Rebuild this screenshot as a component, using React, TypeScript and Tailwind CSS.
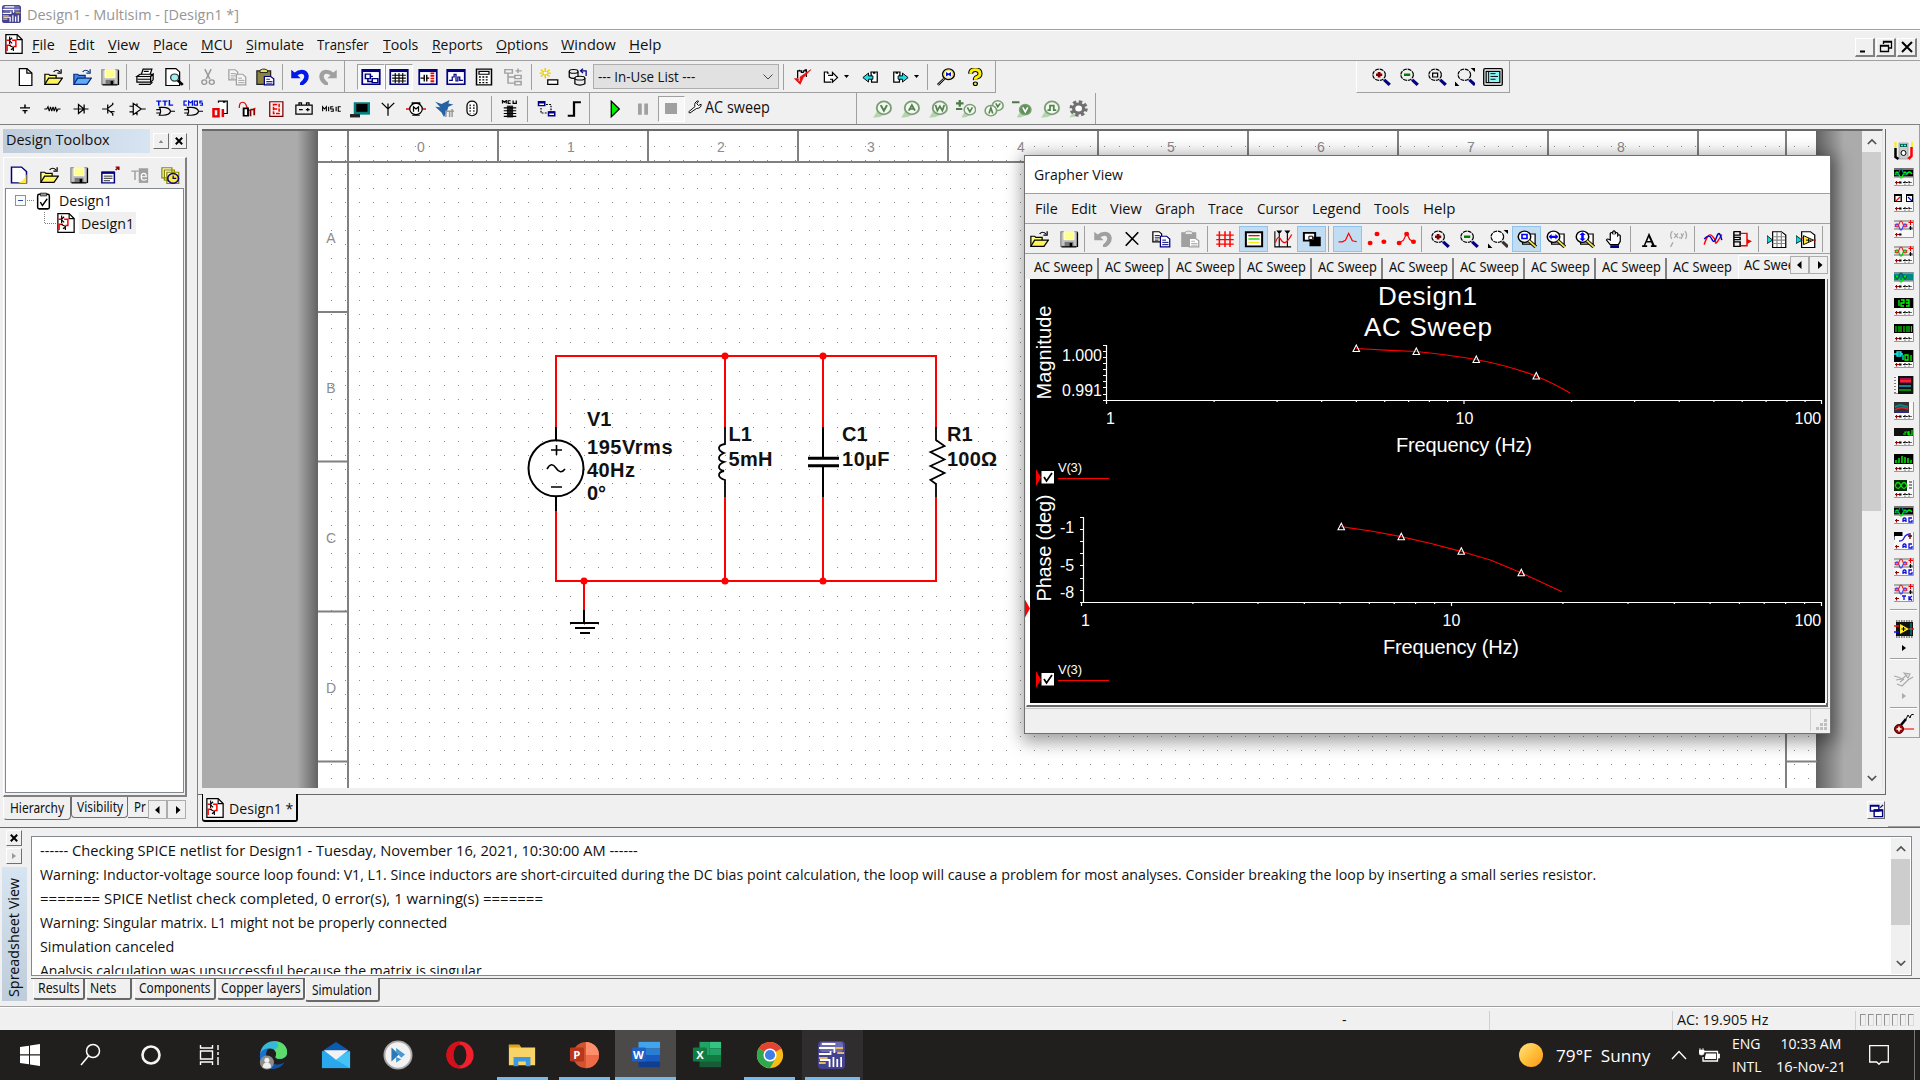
import React, { useLayoutEffect, useRef } from "react";

type Kids = { children?: React.ReactNode };

/* Text squeezed or stretched to an exact rendered width. */
function Fit({ w, className = "", children }: { w: number; className?: string } & Kids) {
  const ref = useRef<HTMLSpanElement>(null);
  useLayoutEffect(() => {
    const el = ref.current;
    if (el && el.offsetWidth) el.style.transform = `scaleX(${w / el.offsetWidth})`;
  });
  return (
    <span className={`inline-block shrink-0 whitespace-pre text-left ${className}`} style={{ width: w }}>
      <span ref={ref} className="inline-block origin-left whitespace-pre">{children}</span>
    </span>
  );
}

const UI = "font-['Open_Sans',sans-serif]";
const TAH = "font-['Noto_Sans',sans-serif]";

function Mag({ fill = "none", handle = "#000080", children }: { fill?: string; handle?: string } & Kids) {
  return (
    <>
      <circle cx="6.500" cy="6" r="5" fill={fill} stroke="#000" strokeDasharray="3.200 .7" />
      <path d="M10.500 10.500l4.500 4.500" stroke={handle} strokeWidth="2.600" />
      {children}
    </>
  );
}

const openFolder = (a: string, b: string, s: string) => (
  <>
    <path d="M1.500 14V5.500h3l1 1h5V9" fill={a} stroke={s} />
    <path d="M1.500 14.500l3-5.500h11l-3.500 5.500z" fill={b} stroke={s} />
    <path d="M8.500 3.500q2.500-3 5 0M14.500 1v3.500h-3" fill="none" stroke={s} />
  </>
);
const floppy = (
  <>
    <path d="M1.500 1.500h13v13h-13z" fill="#c4c4c4" stroke="#888" />
    <path d="M4 1.500h8v7H4z" fill="#ffff8c" stroke="#fff" strokeWidth=".8" />
    <path d="M4.500 10.500h7V15h-7z" fill="#777" /><path d="M8.500 11.500h2V15h-2z" fill="#000" />
    <path d="M2 15h12M14.800 2v13" stroke="#000" />
  </>
);
const pages = (c: string, f: string, d: string) => (
  <>
    <path d="M1.500 1.500h5l2 2v7h-7z" fill={f} stroke={c} /><path d="M3 5h4M3 7h4M3 9h3" stroke={c} strokeWidth=".8" />
    <path d="M7.500 5.500h5l2.500 2.500v7h-7.500z" fill={f} stroke={d} /><path d="M9 9h3M9 11h5M9 13h5" stroke={d} strokeWidth=".8" />
  </>
);
const paste = (a: string, b: string, c: string, k: string) => (
  <>
    <path d="M1.500 2.500h11v12h-11z" fill={a} stroke={b} /><path d="M4 4V2l2-1h2l2 1v2z" fill={k} stroke={b} strokeWidth=".8" />
    <path d="M7.500 7.500h5l2.500 2v5.500h-7.500z" fill="#fff" stroke={c} /><path d="M9 10h3M9 12h5M9 13.500h5" stroke={c} strokeWidth=".7" />
  </>
);
const undo = (c: string) => (
  <path d="M1 1.500v7.500h7.500L6 6.500Q9 4 10.800 5.800q1.500 2.200-.8 5l-2 2.200V15h2.500q4.500-3 4.500-8Q14.500 2 9.500 1.500 6 1.500 3.700 4z" fill={c} />
);
const sheetIcon = (
  <>
    <path d="M1.500 .5h9l4 4v11h-13z" fill="#fff" stroke="#000" /><path d="M10.500 .5v4h4" fill="none" stroke="#000" strokeWidth=".9" />
    <path d="M2 5h2M6.500 5h3v5h-2M2.500 13.500V9h3" fill="none" stroke="#f00" strokeWidth="1.200" />
    <path d="M4.500 2v6M4.500 5l2-2M4.500 5.500l2 2M4 9l4 2M7.500 10.500v3M5.500 12.500l2-1" fill="none" stroke="#000" strokeWidth=".9" />
  </>
);
const navyBox = (inner: React.ReactNode) => (
  <>
    <path d="M1 1.500h14v13H1z" fill="#fff" stroke="#000080" strokeWidth="1.400" /><path d="M1 1h14v2.600H1z" fill="#000080" />
    {inner}
  </>
);
const gate = (
  <path d="M3.500 6.500h3q5 0 6 3.500-1 3.500-6 3.500h-3q2-3.500 0-7zM1 8.500h3M1 11.500h3M12.500 10H16" fill="none" stroke="#000" />
);
const probe = (inner: React.ReactNode, solid?: boolean) => (
  <>
    <path d="M1 15.500l4-7 4 5q-3 2.500-8 2z" fill="#b4d4ae" />
    <circle cx="9.500" cy="7" r="5.700" fill={solid ? "#5f8f5a" : "#f4f8f2"} stroke="#7a9f74" strokeWidth="1.500" />
    {inner}
  </>
);
const vL = <path d="M7 4.500l2.500 5 2.500-5" fill="none" stroke="#55804f" strokeWidth="1.600" />;
const zoomBase = (
  <>
    <path d="M4.500 3.500h10v9h-10z" fill="#fff" stroke="#000" /><circle cx="6" cy="6" r="5" fill="#fff" stroke="#000" strokeWidth="1.200" />
    <path d="M9.500 9.500l5.500 5.500" stroke="#000" strokeWidth="3" /><path d="M9.500 9.500l5.500 5.500" stroke="#f0e050" strokeWidth="1.500" />
  </>
);

const ICONS: Record<string, React.ReactNode> = {
  new: <><path d="M3.500 .5h6l4 4v11h-10z" fill="#fff" stroke="#000" /><path d="M9.500 .5v4h4" fill="none" stroke="#000" /></>,
  newy: <><path d="M2 1h8l4 4v10H2z" fill="#fff" stroke="#000080" strokeWidth="1.200" /><path d="M14 7v8H7q5-1 7-8z" fill="#ffe838" /></>,
  open: openFolder("#ffff80", "#fff45a", "#000"),
  openb: openFolder("#3d8ae4", "#62aaf4", "#0a2c80"),
  save: floppy,
  print: <><path d="M5 6l1.500-5h7L12 6" fill="#fff" stroke="#000" /><path d="M1.500 7.500L4 5.500h10l-1.500 2zM1.500 7.500h11v5h-11z" fill="#eee" stroke="#000" /><path d="M12.500 7.500l2-2v5l-2 2M3 14.500h9l2-2M2 10h10M7 3h4" fill="none" stroke="#000" /></>,
  preview: <><path d="M1.500 .5h8l3 3v12h-11z" fill="#fff" stroke="#000" /><circle cx="8.500" cy="8.500" r="3.200" fill="#9ff0f4" stroke="#333" /><path d="M11 11l4 4" stroke="#000" strokeWidth="2.200" /></>,
  cut: <g fill="none" stroke="#9a9a9a" strokeWidth="1.200"><path d="M5.500 1L9.500 10M10.500 1L6.500 10" /><circle cx="5" cy="12.500" r="2" /><circle cx="11" cy="12.500" r="2" /></g>,
  copyg: pages("#a0a0a0", "#f4f4f4", "#a0a0a0"),
  copy: pages("#000", "#fff", "#000080"),
  paste: paste("#8a8440", "#222", "#000080", "#e8e060"),
  pasteg: paste("#a0a0a0", "#a0a0a0", "#a0a0a0", "#e8e8e8"),
  undo: undo("#0018e8"),
  undog: undo("#a0a0a0"),
  redog: <g transform="translate(16 0) scale(-1 1)">{undo("#a0a0a0")}</g>,
  tb1: navyBox(<path d="M3.500 5.500h4v4h-4zM7.500 7.500h2M9 9.500h4.500v3.500H9zM5.500 9.500v2.500H9" fill="none" stroke="#000080" strokeWidth="1.200" />),
  tb2: navyBox(<path d="M2.500 6.500h11M2.500 9h11M2.500 11.500h11M5 4.500v9M8 4.500v9M11 4.500v9" stroke="#000" strokeWidth=".9" />),
  tb3: navyBox(<><path d="M2 9h3M5 6v6M7 6v6M7 9h2" stroke="#000" strokeWidth="1.100" /><path d="M11.500 4v10" stroke="#e00" strokeWidth="3" strokeDasharray="1.500 .8" /></>),
  tb4: navyBox(<path d="M2.500 11h2.500V8h1.500V5.500H8v6h1.500V8H11v3h2.500" fill="none" stroke="#000080" strokeWidth="1" />),
  tb5: <><path d="M2 1h12v14H2z" fill="#fff" stroke="#000" strokeWidth="1.200" /><path d="M4 3h8v2.500H4z" fill="#fff" stroke="#000" /><path d="M4 8h8M4 10.500h8M4 13h8" stroke="#000" strokeWidth="1.200" strokeDasharray="1.500 1.200" /></>,
  tb6: <path d="M1.500 1.500h6v3h-6zM9.500 6.500h5v3h-5zM9.500 12h5v3h-5zM4 4.500v9h5.500M4 8h5.500M12 .5v4M10 2.500h5" fill="none" stroke="#a0a0a0" strokeWidth="1.200" />,
  star: <><path d="M5 0v9M.5 4.500h9M1.500 1.500l7 6M8.500 1.500l-7 6" stroke="#ecd000" strokeWidth="1.200" /><path d="M3.800 3.500h2.500v2H3.800z" fill="#fff" /><path d="M7 10.500h8v4H7z" fill="#fff" stroke="#000" /></>,
  db: <><g fill="#eee" stroke="#000"><path d="M1 3v5q3 2.500 7 0V3" /><ellipse cx="4.500" cy="3" rx="3.500" ry="1.700" /><path d="M5.500 9v5q4 2.500 8 0V9" /><ellipse cx="9.500" cy="9" rx="4" ry="1.700" /></g><path d="M14.500 7V2.500h-4M12 .5l-2 2 2 2" fill="none" stroke="#000080" /></>,
  chk: <><path d="M4.500 9V2.500h1.500v-1M6 2.500h1.500V4H9V2.500h1.500v-1h1V8" fill="none" stroke="#000" /><path d="M2 9.500h3V12h1.500V8L15 1.500 9 8.500 6.500 14.500z" fill="#e81010" stroke="#e81010" strokeWidth=".7" /></>,
  exp: <><path d="M7 4.500H6v-1H3.500v9H9" fill="#fff" stroke="#000" /><path d="M6.500 6.500H10V4l4 4.500-4 4V10H8" fill="#fff" stroke="#000" /></>,
  impc: <><path d="M8 3.500h2v1h1v-1h2v9H8.500z" fill="#fff" stroke="#000" /><path d="M1.500 8.500l4.500-4v2.500h3.500v3H6v2.500z" fill="#18dfe8" stroke="#000" strokeWidth=".8" /></>,
  expc: <><path d="M8 3.500H6v1H5v-1H3v9h4.500z" fill="#fff" stroke="#000" /><path d="M14.500 8.500L10 4.500v2.500H6.500v3H10v2.500z" fill="#18dfe8" stroke="#000" strokeWidth=".8" /></>,
  find: <><circle cx="10" cy="5.500" r="4.700" fill="#fff" stroke="#000" strokeWidth="1.200" /><circle cx="10" cy="5.500" r="3.500" fill="none" stroke="#e8dc50" /><path d="M8 3.500l2 1.300 2-1.300v4l-2-1.300-2 1.300z" fill="#0010e0" /><path d="M6.500 9.500L1.500 15" stroke="#000" strokeWidth="2" /><path d="M6.500 9.500L1.500 15" stroke="#fff" strokeWidth=".6" /></>,
  help: <><path d="M4.500 5q0-3.500 3.700-3.500T12 5q0 2-2 3t-1.700 2.500" fill="none" stroke="#000" strokeWidth="4" /><path d="M4.500 5q0-3.500 3.700-3.500T12 5q0 2-2 3t-1.700 2.500" fill="none" stroke="#fff000" strokeWidth="2.400" /><circle cx="8.300" cy="14" r="1.600" fill="#fff000" stroke="#000" /></>,
  zin: <Mag><path d="M6.500 3.500v5M4 6h5" stroke="#800000" strokeWidth="2.200" /></Mag>,
  zout: <Mag><path d="M4 6h5" stroke="#008000" strokeWidth="2.200" /></Mag>,
  zarea: <Mag><path d="M4.500 4.500h4v3.500h-4z" fill="none" stroke="#000" /></Mag>,
  zfit: <g><g transform="translate(1 0)"><Mag /></g><path d="M12.500 0H16v3.500zM0 12v4h3.500z" fill="#000" /></g>,
  zfitg: <g><g transform="translate(1 0)"><Mag fill="#fdfdfd" handle="#333" /></g><path d="M12.500 0H16v3.500zM0 12v4h3.500z" fill="#000" /></g>,
  zsheet: <><rect x=".6" y=".6" width="14.800" height="14.800" rx="1" fill="#fff" stroke="#000" strokeWidth="1.100" /><path d="M2.500 3h11v10h-11z" fill="#8ff4f4" stroke="#000" /><path d="M4.500 3v10M6 5h4M6 7.500h6M6 10h4" stroke="#000" strokeWidth=".8" /></>,
  src: <path d="M8 4v3M4 7h8M6 9.500h4M8 9.500V12" stroke="#000" strokeWidth="1.200" />,
  res: <path d="M1 8h2l1-2 1 4 1-4 1 4 1-4 1 4 1-4 1 4 1-2h2" fill="none" stroke="#000" strokeWidth=".9" />,
  diode: <path d="M2 8h12M6 4v8l4.500-4zM10.500 4v8" fill="none" stroke="#000" />,
  bjt: <path d="M2.500 8H7M7 4v8M7 7.500L11 4V2.500M7 8.500L11 12v2M8.500 10l4 .5" fill="none" stroke="#000" strokeWidth="1" />,
  opamp: <path d="M5 3v10l6.500-5zM2 5.500h3M2 10.500h3M11.500 8H15M8 3v2M8 11v2.500" fill="none" stroke="#000" />,
  ttl: <>{gate}<path d="M1 1h4M3 1v4M6 1h4M8 1v4M11.500 0v4.500h3" fill="none" stroke="#0010e0" strokeWidth="1.200" /></>,
  cmos: <>{gate}<path d="M3 1H.8v3.500H3M4.500 5V1l1.500 1.500L7.500 1v4M9 1h2.500v3.500H9zM15.500 1h-2v1.700h2v2h-2" fill="none" stroke="#0010e0" /></>,
  misd: <><path d="M6 2.500V1h4v1h1V1h2v11H9" fill="#fff" stroke="#000" /><path d="M2 8h4v6.500H2zM9.500 8v7" fill="none" stroke="#e80000" strokeWidth="2" /></>,
  mixed: <><path d="M1 7q0-5 2.500-5T7 6t3 3M11 9l3-2" fill="none" stroke="#e00" strokeWidth="1" /><path d="M4.500 7.500h3.500v6.500H4.500z" fill="#fff" stroke="#000" strokeWidth="1.500" /><path d="M10 8.500v6M10 8.500h3v5" fill="none" stroke="#800" strokeWidth="1.400" /></>,
  ind: <><path d="M3 1.500h10.500v13H3z" fill="#fee" stroke="#700" strokeWidth="1" /><path d="M6 4h4.500v8H6zM6 8h4.500" fill="none" stroke="#e00" strokeWidth="1.200" strokeDasharray="3 1" /></>,
  power: <path d="M1.500 4.500h13v8h-13zM4 4V2.500h2V4M10 4V2.500h2V4M4 8.500h3M9.500 8.500h3M11 7v3" fill="none" stroke="#000" />,
  misc: <path d="M.5 10V6l1.500 2 1.500-2v4M5.300 6v4M9 6H7v2h2v2H7M11.300 6v4M15 6h-2v4h2" fill="none" stroke="#000" strokeWidth=".9" />,
  term: <><path d="M3 2h13v11H3z" fill="#008080" /><path d="M5 3.500h9v7H5z" fill="#000" /><path d="M0 12.500h8v3H0z" fill="#222" /></>,
  rf: <path d="M8 3v11M3 2.500l5 5.500 5-5.500" fill="none" stroke="#000" strokeWidth="1" />,
  motor: <><path d="M0 8h3M13 8h3" stroke="#e00" strokeWidth="1.400" /><path d="M5 3.500h6v-1H5zM5 13.500h6" stroke="#000" /><circle cx="8" cy="8" r="5" fill="#fff" stroke="#000" /><path d="M6 10.500V6l2 2 2-2v4.500" fill="none" stroke="#000" /></>,
  ni: <><path d="M1 1.500l5 2L12.500 0l-1 3 4 1-4 2-1.500 5-2 4-2-4-5-5 4 .5z" fill="#2763a4" /><path d="M9.500 15v-5h3v5M14.500 8v7M13 10h3" fill="none" stroke="#999" strokeWidth="1.200" /></>,
  conn: <><rect x="4" y="1" width="8" height="13" rx="4" fill="#fff" stroke="#000" /><path d="M6.500 4v8M9.500 4v8" stroke="#000" strokeDasharray="1.500 1" /></>,
  mcu: <><path d="M2 3V.5L3.500 2 5 .5V3M8.500 .7h-2V3h2M10.500 .5V3H13V.5" fill="none" stroke="#000" /><path d="M5.500 5h5v10.500h-5z" fill="#222" /><path d="M3 7h10M3 9.500h10M3 12h10M3 14.500h10" stroke="#000" /></>,
  hier: <><path d="M2 1.500h5V5H2zM10 10.500h5V14H10z" fill="#fff" stroke="#000080" strokeWidth="1.200" /><path d="M2 1h5v2H2zM10 10h5v2H10z" fill="#000080" /><path d="M4 7v4.500h5M8 4h4v5" fill="none" stroke="#000" strokeDasharray="1.500 1" /></>,
  bus: <path d="M3 14h5V2h5.500" fill="none" stroke="#000" strokeWidth="1.800" />,
  play: <path d="M5 1v14l6.500-7z" fill="#00ef00" stroke="#000" />,
  pause: <path d="M4 3h3v10H4zM9 3h3v10H9z" fill="#a0a0a0" />,
  wrench: <path d="M2 15L.8 13.500 8 7.500Q6.500 3 11 1l1 .3-2 3 2 2 3-1.500q.5 4.500-5.500 5z" fill="#fff" stroke="#000" strokeWidth="1.100" />,
  pV: probe(vL),
  pA: probe(<path d="M7 9.500l2.500-5 2.500 5M8 8h3" fill="none" stroke="#55804f" strokeWidth="1.500" />),
  pW: probe(<path d="M6 4.500l1.500 5 2-4 2 4 1.500-5" fill="none" stroke="#55804f" strokeWidth="1.400" />),
  pPM: <g><g transform="translate(3.500 3) scale(.8)">{probe(vL)}</g><path d="M3 0v6M0 3h6M0 8h5" stroke="#4d7a48" strokeWidth="1.800" /></g>,
  pAV: <g><circle cx="11" cy="5" r="4.300" fill="#f4f8f2" stroke="#7a9f74" strokeWidth="1.300" /><circle cx="5.500" cy="9.500" r="4.600" fill="#f4f8f2" stroke="#7a9f74" strokeWidth="1.300" /><path d="M4 12l1.500-5L7 12M9.500 3l1.500 3 2-3" fill="none" stroke="#55804f" strokeWidth="1.300" /></g>,
  pR: <g><g transform="translate(3 3) scale(.8)">{probe(<path d="M7 4.500l2.500 5 2.500-5" fill="none" stroke="#fff" strokeWidth="1.600" />, true)}</g><path d="M0 2h6" stroke="#4d7a48" strokeWidth="1.800" /></g>,
  pD: probe(<path d="M6 9h2V5h3v4h2" fill="none" stroke="#55804f" strokeWidth="1.400" />),
  gear: <><path d="M1 15.500l3-4 3 3z" fill="#b4d4ae" /><circle cx="8.500" cy="7.500" r="5.800" fill="none" stroke="#707070" strokeWidth="3" strokeDasharray="2.600 1.950" /><circle cx="8.500" cy="7.500" r="4" fill="#fff" stroke="#707070" strokeWidth="2.600" /></>,
  prop: <><path d="M1.500 5.500h10v9.500h-10z" fill="#fff" stroke="#000080" strokeWidth="1.200" /><path d="M1.500 5h10v2h-10z" fill="#000080" /><path d="M3 9h7M3 11h7M3 13h5" stroke="#555" /><path d="M12.500 3.500l2-2M12.500 1h2.500v2.500" fill="none" stroke="#900000" strokeWidth="1.300" /></>,
  tag: <><path d="M1 4.500h6M4 4.500v8" stroke="#a0a0a0" strokeWidth="1.200" /><path d="M7 2h7.500v13H7z" fill="#a0a0a0" /><path d="M9 9.500h4q0-3-2-3T9 9.500t2 3 2-1" fill="none" stroke="#fff" /></>,
  hist: <><path d="M1.500 1.500h8v9h-8zM3.500 3.500h8v9h-8zM5.500 5.500h9.500v10H5.500z" fill="#f8f4d0" stroke="#8a8a00" /><circle cx="10.500" cy="11" r="4.300" fill="#ffe838" stroke="#000080" strokeWidth="1.200" /><path d="M10.500 8.500V11h2.500" fill="none" stroke="#000080" /></>,
  clip: <><rect x="2.500" y="2" width="11" height="13" rx="1.500" fill="#fff" stroke="#000" strokeWidth="1.400" /><path d="M5 1h6v2.500H5z" fill="#999" stroke="#000" strokeWidth=".6" /><path d="M5 9l2 3 4.500-6" fill="none" stroke="#000" strokeWidth="1.300" /></>,
  sheet: sheetIcon,
  x: <path d="M3 2l10 11M13 2L3 14" stroke="#000" strokeWidth="1.300" />,
  grid: <path d="M1 4.500h14M1 8.500h14M1 12.500h14M3.500 1v14M8 1v14M12 1v14" stroke="#f00" strokeWidth="1.200" />,
  legend: <><path d="M1.500 2h13v12.500h-13z" fill="#fff" stroke="#000" strokeWidth="1.600" /><path d="M3.500 5h9" stroke="#f00" strokeWidth="1.200" /><path d="M3.500 8h9" stroke="#0d0" strokeWidth="1.200" /><path d="M3.500 11h9" stroke="#fe0" strokeWidth="1.200" /></>,
  cursors: <><path d="M1.500 1v14h13M5 1v14M11.500 1v14M3.500 1h3l-1.500 2zM10 1h3l-1.500 2z" fill="none" stroke="#000" strokeWidth=".9" /><path d="M2 11q2-7 4-3t4 3 5-7" fill="none" stroke="#f00" /></>,
  contrast: <><path d="M1.500 2.500h9v7h-9z" fill="#fff" stroke="#000" strokeWidth="1.600" /><path d="M7 6h8v8.500H6V9h3V6z" fill="#000" /><path d="M5.500 5.500h3v3h-3z" fill="#fff" stroke="#000" strokeWidth=".8" /></>,
  peak: <path d="M.5 10.500h3L6 9l2.500-6 3 6.500 3.500 1" fill="none" stroke="#f00" />,
  dots: <g fill="#f00"><circle cx="2.500" cy="11.500" r="2" /><circle cx="8" cy="3.500" r="2" /><circle cx="13.500" cy="10.500" r="2" /></g>,
  dotsl: <><path d="M2.500 11.500L6 9l2.500-6L11 8.500l3 2" fill="none" stroke="#f00" /><g fill="#f00"><circle cx="2.500" cy="11.500" r="2" /><circle cx="8.500" cy="3.500" r="2" /><circle cx="14" cy="10.500" r="2" /></g></>,
  zr1: <>{zoomBase}<path d="M4 4h4v3.500H4z" fill="none" stroke="#00f" strokeWidth="1.300" /></>,
  zr2: <>{zoomBase}<path d="M2 6l2.500-2.500V5h3V3.500L10 6 7.500 8.500V7h-3v1.500z" fill="#00f" /></>,
  zr3: <>{zoomBase}<path d="M6 2l2.500 2.500H7v3h1.500L6 10 3.500 7.500H5v-3H3.500z" fill="#00f" /></>,
  hand: <><path d="M5 13L2 9q0-2 3 0V3q1-1.500 2 0V1.500q1-1.500 2 0V3q1-1.500 2 0v2q1-1.500 2 0v5l-1.500 3z" fill="#fff" stroke="#000" /><path d="M5 13.500h7V16H5z" fill="#000080" /></>,
  letA: <path d="M8 2.500l4.500 11h1.500v1.500H9.500v-1.500h1l-.8-2.500H6l-1 2.500h1.500v1.500H2.500v-1.500h1.300zM7.800 6.500L6.600 9.700h2.600z" fill="#000" />,
  xy: <path d="M3.500 1Q1 4 3 8M13.500 1q2.500 3 .5 7M5 3l3 4M8 3L5 7M9.500 6v1.500M10.500 3l1 3M12.500 3l-2 5M4 11l-2 4" fill="none" stroke="#a8a8a8" />,
  waves: <><path d="M1 13Q4 2 7 5t3 6 5-7" fill="none" stroke="#f00" strokeWidth="1.200" /><path d="M1 8q4-5 6 0t4-2 4 3" fill="none" stroke="#00c" strokeWidth="1.200" /></>,
  merge: <><path d="M1.500 1v14M1.500 1.500h5v3h-5M1.500 6.500h5v2h-5M1.500 10.500h5v4h-5" fill="none" stroke="#000" strokeWidth="1.200" /><path d="M7 3h5v11H7M12 10h2" fill="none" stroke="#e00" strokeWidth="1.200" /><path d="M12 8l4 2-4 2.500z" fill="#e00" /></>,
  xls: <><path d="M4.500 1.500h7l3.500 3v11H4.500z" fill="#fff" stroke="#000" /><path d="M4.500 6h10M4.500 9h10M4.500 12h10M8 2v13M11.500 2v13" stroke="#888" /><path d="M0 5l4.500 4L0 12z" fill="#12d5e0" stroke="#000" strokeWidth=".7" /></>,
  lv: <><path d="M4.500 1.500h7l3.500 3v11H4.500z" fill="#fff" stroke="#000" /><path d="M6 5v8l8-4z" fill="#ffe838" stroke="#000" strokeWidth=".8" /><path d="M8 9h4M10 7.500v3" stroke="#000" strokeWidth=".8" /><path d="M0 5l5 4-5 3z" fill="#12d5e0" stroke="#000" strokeWidth=".7" /><path d="M14 9h2M4 7h2" stroke="#e00" strokeWidth="1.200" /></>,
  cascade: <><path d="M1.500 2.500h9v6h-9zM5.500 7.500h9v7h-9z" fill="#fff" stroke="#000080" strokeWidth="1.500" /><path d="M1.500 2h9v2h-9zM5.500 7h9v2h-9z" fill="#000080" /><path d="M12 5l3-3" stroke="#000080" strokeWidth="1.300" /></>,
};

function Ic({ n, big }: { n: string; big?: boolean }) {
  return (
    <svg viewBox="0 0 16 16" preserveAspectRatio="none" className={big ? "h-5 w-5 shrink-0" : "h-[18px] w-5 shrink-0"} fill="none">
      {ICONS[n]}
    </svg>
  );
}
const Sep = ({ m = "mx-[3px]" }: { m?: string }) => <div className={`h-[26px] w-px shrink-0 self-center bg-[#a0a0a0] ${m}`} />;

function Slots({ names, w, on = [], onCls = "border border-[#a0a0a0] border-b-white border-r-white bg-[#f7f7f7]" }: { names: string[]; w: string; on?: string[]; onCls?: string }) {
  return (
    <>
      {names.map((n) => (
        <div key={n} className={`flex h-[26px] shrink-0 items-center justify-center ${w} ${on.includes(n) ? onCls : ""}`}>
          <Ic n={n} />
        </div>
      ))}
    </>
  );
}

const Caret = () => (
  <svg viewBox="0 0 5 3" className="h-[3px] w-[5px] shrink-0"><path d="M0 0h5L2.500 3z" fill="#000" /></svg>
);

const MENU: [string, string, string, number, string][] = [
  ["", "F", "ile", 23, ""], ["", "E", "dit", 26, "ml-[14px]"], ["", "V", "iew", 32, "ml-[13px]"], ["", "P", "lace", 35, "ml-[13px]"],
  ["", "M", "CU", 32, "ml-[13px]"], ["", "S", "imulate", 58, "ml-[13px]"], ["Tra", "n", "sfer", 52, "ml-[13px]"], ["", "T", "ools", 35, "ml-[14px]"],
  ["", "R", "eports", 51, "ml-[14px]"], ["", "O", "ptions", 52, "ml-[13px]"], ["", "W", "indow", 55, "ml-[13px]"], ["", "H", "elp", 32, "ml-[13px]"],
];

function WinBtn({ children }: Kids) {
  return <div className="flex h-[19px] w-5 items-center justify-center border border-white border-b-2 border-r-2 border-b-[#808080] border-r-[#808080]"><svg viewBox="0 0 14 14" className="h-[14px] w-[14px]" fill="none" stroke="#000">{children}</svg></div>;
}

function Top() {
  return (
    <>
      <div className="flex h-[30px] items-center border-b border-[#a0a0a0] bg-white pb-[2px] pl-[2px]">
        <NiLogo cls="h-[18px] w-[19px]" />
        <Fit w={212} className="ml-[6px] text-[15px] leading-[20px] text-[#969696]">Design1 - Multisim - [Design1 *]</Fit>
      </div>
      <div className="flex h-[31px] items-center border-b border-[#a0a0a0] border-t border-t-white pl-[4px] pr-[3px]">
        <div className="-mt-[3px]"><Ic n="sheet" big /></div>
        <div className="-mt-[4px] ml-[8px] flex items-center text-[15px] leading-[20px] underline-offset-2">
          {MENU.map(([a, b, c, w, m]) => <Fit key={b + c} w={w} className={m}>{a}<span className="underline">{b}</span>{c}</Fit>)}
        </div>
        <div className="ml-auto flex gap-px pt-[4px]">
          <WinBtn><path d="M2 11.500h5" strokeWidth="2" /></WinBtn>
          <WinBtn><path d="M4.500 4V1.500h8V8H10M4.500 2h8M1.500 5.500h8v6h-8zM1.500 6h8" strokeWidth="1.300" /></WinBtn>
          <WinBtn><path d="M2 2l10 10M12 2L2 12" strokeWidth="2" /></WinBtn>
        </div>
      </div>
      <div className="flex h-[32px]">
        <div className="flex w-[996px] items-center border-b border-r border-[#a0a0a0] pl-[11px]">
          <Slots w="w-[28.300px]" names={["new", "open", "openb", "save"]} />
          <Sep m="ml-[2px] mr-[4px]" />
          <Slots w="w-[28.500px]" names={["print", "preview"]} />
          <Sep m="ml-[1px] mr-[4px]" />
          <Slots w="w-[28.500px]" names={["cut", "copyg", "paste"]} />
          <Sep m="ml-[2px] mr-[3px]" />
          <Slots w="w-[28.500px]" names={["undo", "redog"]} />
          <div className="ml-px mr-[12px] h-full w-px bg-[#a0a0a0]" />
          <Slots w="w-[28.400px]" on={["tb1", "tb2"]} names={["tb1", "tb2", "tb3", "tb4", "tb5", "tb6"]} />
          <Sep m="ml-[4px] mr-[3px]" />
          <Slots w="w-[28.500px]" names={["star", "db"]} />
          <div className="ml-px flex h-[25px] w-[186px] items-center justify-between border border-[#adadad] bg-[#e1e1e1] pl-[4px] pr-[5px]">
            <Fit w={97} className="text-[14px] leading-[20px]">--- In-Use List ---</Fit>
            <svg viewBox="0 0 10 6" className="h-[6px] w-[10px]" fill="none" stroke="#444"><path d="M.5.500L5 5 9.500.500" /></svg>
          </div>
          <Sep m="ml-[4px] mr-[4px]" />
          <Slots w="w-[28px]" names={["chk", "exp"]} />
          <Caret />
          <div className="w-[7px]" />
          <Slots w="w-[29px]" names={["impc", "expc"]} />
          <Caret />
          <Sep m="ml-[8px] mr-[4px]" />
          <Slots w="w-[28.500px]" names={["find", "help"]} />
        </div>
        <div className="ml-[360px] flex w-[154px] items-center border-b border-l border-r border-[#a0a0a0] border-l-white pl-[10px]">
          <Slots w="w-[28px]" names={["zin", "zout", "zarea", "zfit", "zsheet"]} />
        </div>
      </div>
      <div className="flex h-[31px] w-[1096px] items-center border-r border-[#a0a0a0] pl-[11px]">
        <Slots w="w-[27.940px]" names={["src", "res", "diode", "bjt", "opamp", "ttl", "cmos", "misd", "mixed", "ind", "power", "misc", "term", "rf", "motor", "ni", "conn"]} />
        <Sep m="ml-[5px] mr-[4px]" />
        <Slots w="w-[28px]" names={["mcu"]} />
        <Sep m="ml-[3px] mr-[4px]" />
        <Slots w="w-[28px]" names={["hier", "bus"]} />
        <div className="ml-px mr-[11px] h-full w-px bg-[#a0a0a0]" />
        <Slots w="w-[28px]" names={["play", "pause"]} />
        <div className="ml-px flex h-[26px] w-[27px] items-center justify-center border border-[#a0a0a0] border-b-white border-r-white bg-[#f7f7f7]"><div className="h-[11px] w-3 bg-[#a0a0a0]" /></div>
        <div className="-mt-[4px] ml-[3px] flex items-center">
          <svg viewBox="0 0 16 16" className="h-[14px] w-[14px]">{ICONS.wrench}</svg>
          <Fit w={65} className="ml-[3px] text-[15.500px] leading-[20px]">AC sweep</Fit>
        </div>
        <div className="ml-[86px] mr-[11px] h-full w-px bg-[#a0a0a0]" />
        <Slots w="w-[28px]" names={["pV", "pA", "pW", "pPM", "pAV", "pR", "pD", "gear"]} />
      </div>
    </>
  );
}

function NiLogo({ cls }: { cls: string }) {
  return (
    <svg viewBox="0 0 28 28" preserveAspectRatio="none" className={cls}>
      <rect width="28" height="28" rx="4" fill="#45438f" /><rect x="2" y="1" width="24" height="10" rx="3" fill="#6d6bb0" />
      <path d="M1 7h16v5M1 13h12v-3M4 3h14M16 26V16M20 26v-8M24 26V16M12 26v-7H2" fill="none" stroke="#fff" strokeWidth="1.800" />
      <path d="M18 7h8M20 12h7M1 17h9M1 22h7" stroke="#e0b96c" strokeWidth="1.800" />
    </svg>
  );
}

function TriPair({ h }: { h: string }) {
  return (
    <div className={`flex shrink-0 ${h}`}>
      {["M6.500 1v8L2 5z", "M4 1v8l4.500-4z"].map((d) => (
        <div key={d} className="flex w-[19px] items-center justify-center border border-[#adadad] bg-[#f0f0f0]">
          <svg viewBox="0 0 10 10" className="h-[10px] w-[10px]"><path d={d} fill="#000" /></svg>
        </div>
      ))}
    </div>
  );
}

const miniBtn = "flex h-4 w-4 items-center justify-center border border-white border-b-[#707070] border-r-[#707070] bg-[#f0f0f0]";
const MiniX = () => <div className={miniBtn}><svg viewBox="0 0 8 8" className="h-[8px] w-[8px]"><path d="M.8.800l6.400 6.400M7.200.800L.8 7.200" stroke="#000" strokeWidth="2" /></svg></div>;

function Toolbox() {
  return (
    <div className="flex h-full w-[198px] shrink-0 flex-col border-r border-[#808080] pl-[3px] pt-[4px]">
      <div className="flex h-[24px] items-center">
        <div className="flex h-full w-[147px] items-center bg-gradient-to-r from-[#bfcddb] to-[#d7e4f2] pb-[5px] pl-[3px]">
          <Fit w={104} className="text-[15px] leading-[20px]">Design Toolbox</Fit>
        </div>
        <div className="ml-[3px] flex gap-[2px]">
          <div className={miniBtn}><svg viewBox="0 0 6 4" className="h-[3px] w-[6px]"><path d="M0 4l3-4 3 4z" fill="#888" /></svg></div>
          <MiniX />
        </div>
      </div>
      <div className="mt-[4px] flex h-[640px] w-[184px] flex-col border-b-2 border-r-2 border-[#808080] border-l border-l-white border-t border-t-white">
        <div className="flex h-[30px] items-center pt-[3px]">
          <Slots w="w-[30.200px]" names={["newy", "open", "save", "prop", "tag", "hist"]} />
        </div>
        <div className="ml-px h-[605px] w-[179px] border border-[#828790] bg-white">
          <div className="flex h-[23px] items-center pl-[9px]">
            <svg viewBox="0 0 20 11" className="h-[11px] w-[20px]"><rect x=".5" y=".5" width="10" height="10" fill="#fafafa" stroke="#919191" /><path d="M3 5.500h5" stroke="#2b4f9e" /><path d="M12 5.500h7" stroke="#808080" strokeDasharray="1 1" /></svg>
            <svg viewBox="0 0 16 16" preserveAspectRatio="none" className="h-[18px] w-[17px]">{ICONS.clip}</svg>
            <Fit w={53} className="-mt-px ml-[7px] text-[15px] leading-[20px]">Design1</Fit>
          </div>
          <div className="flex h-[22px] items-center pl-[38px]">
            <svg viewBox="0 0 12 22" className="h-[22px] w-[12px]"><path d="M.5 0v11.500H12" fill="none" stroke="#808080" strokeDasharray="1 1" /></svg>
            <Ic n="sheet" big />
            <div className="ml-[3px] flex h-[22px] items-center bg-[#f0f0f0] px-[2px] pb-px"><Fit w={53} className="text-[15px] leading-[20px]">Design1</Fit></div>
          </div>
        </div>
      </div>
      <div className={`flex h-[25px] items-start text-[13.500px] leading-[18px] ${TAH}`}>
        <div className="flex h-[23px] w-[68px] items-center justify-center rounded-b border border-t-0 border-[#707070] border-l-white"><Fit w={54}>Hierarchy</Fit></div>
        <div className="flex h-[21px] w-[57px] items-center justify-center rounded-b border border-t-0 border-[#707070]"><Fit w={46}>Visibility</Fit></div>
        <div className="flex h-[21px] w-[20px] items-center overflow-hidden border-b border-[#707070] pl-[6px]"><Fit w={12}>Pr</Fit></div>
        <div className="pt-[3px]"><TriPair h="h-[19px]" /></div>
      </div>
    </div>
  );
}

function dotPath() {
  let d = "";
  for (let i = -17; i < 90; i++)
    for (let j = -15; j < 32; j++) {
      const x = Math.round(556 + 14.0625 * i);
      const y = Math.round(342.4 + 14.0625 * j);
      if (x > 319 && x < 1814 && y > 132) d += `M${x} ${y}h1v1h-1z`;
    }
  return d;
}
const DOTS = dotPath();
const COLS = [498, 648, 798, 948, 1098, 1248, 1398, 1548, 1698];
const ROWS = [312, 461.5, 611.5, 761.5];

function Lab({ x, y, w, children }: { x: number; y: number; w?: number } & Kids) {
  return <text x={x} y={y} textLength={w} fontSize="20" fontWeight="bold" fontFamily="Liberation Sans, Arial, sans-serif" fill="#111">{children}</text>;
}

function Schematic() {
  return (
    <svg viewBox="202 131 1660 657" className="h-[657px] w-[1660px] shrink-0">
      <defs>
        <linearGradient id="shL"><stop offset="0" stopColor="#ababab" /><stop offset="1" stopColor="#636363" /></linearGradient>
        <linearGradient id="shR"><stop offset="0" stopColor="#636363" /><stop offset="1" stopColor="#ababab" /></linearGradient>
      </defs>
      <rect x="202" y="131" width="1660" height="657" fill="#ababab" />
      <rect x="297" y="131" width="21" height="657" fill="url(#shL)" />
      <rect x="1816" y="131" width="28" height="657" fill="url(#shR)" />
      <rect x="318" y="131" width="1498" height="657" fill="#fff" />
      <path d={DOTS} fill="#8c8c8c" />
      <g stroke="#808080" strokeWidth="2">
        <path d="M318 162H1816M348 131V788M1786 131V788" />
        {COLS.map((x) => <path key={x} d={`M${x} 131v31`} />)}
        {ROWS.map((y) => <path key={y} d={`M318 ${y}h30M1786 ${y}h31`} />)}
      </g>
      <g fontFamily="Liberation Sans, Arial, sans-serif" fontSize="14" fill="#8c8c8c" textAnchor="middle">
        {["0", "1", "2", "3", "4", "5", "6", "7", "8"].map((t, i) => <text key={t} x={421 + 150 * i} y="151.500">{t}</text>)}
        {["A", "B", "C", "D"].map((t, i) => <text key={t} x="331" y={242.500 + 150 * i}>{t}</text>)}
      </g>
      <g stroke="#f00" strokeWidth="2" fill="none">
        <path d="M556 427V356H936V427M556 511V581H936V497M725 356V427M725 497V581M823 356V427M823 497V581M584 581V610" />
      </g>
      <g fill="#f00">
        {[[725, 356], [823, 356], [584, 581], [725, 581], [823, 581]].map(([x, y]) => <circle key={`${x}-${y}`} cx={x} cy={y} r="3.500" />)}
      </g>
      <g stroke="#000" strokeWidth="2" fill="none">
        <path d="M556 427V440M556 496V511" /><ellipse cx="556" cy="468.300" rx="27.500" ry="28" />
        <path d="M551 450h11M556.500 445v10M551 487h11M547 469q4.500-8 9-1t9 1" strokeWidth="1.600" />
        <path d="M725 427V444q-6 1-6 4t5 5q-5 2-5 5t5 4q-5 2-5 5t5 4q-5 1-5 4t6 5V497" strokeWidth="1.800" />
        <path d="M823 427V458M823 466V497" /><path d="M808 458.300h31M808 465.700h31" strokeWidth="3" />
        <path d="M936 427V440l8.500 6L930.500 452l14 7.500L930.500 466l14 7-14 7 5.500 4V497" strokeWidth="1.800" />
        <path d="M584 610V623M570 623h29M575 628h20M580 633h10" />
      </g>
      <Lab x={587} y={425.500}>V1</Lab><Lab x={587} y={454} w={85.500}>195Vrms</Lab><Lab x={587} y={477} w={48}>40Hz</Lab><Lab x={587} y={500}>0°</Lab>
      <Lab x={728.500} y={441}>L1</Lab><Lab x={728.500} y={466} w={44}>5mH</Lab>
      <Lab x={842} y={441}>C1</Lab><Lab x={842} y={466} w={47.500}>10µF</Lab>
      <Lab x={947} y={441}>R1</Lab><Lab x={947} y={466} w={50}>100Ω</Lab>
    </svg>
  );
}

const Chev = ({ up }: { up?: boolean }) => (
  <svg viewBox="0 0 12 8" className="h-[7px] w-[10px]"><path d={up ? "M1 7l5-5 5 5" : "M1 1l5 5 5-5"} fill="none" stroke="#505050" strokeWidth="2" /></svg>
);

function VScroll({ thumb }: { thumb: string }) {
  return (
    <div className="flex h-full w-[19px] shrink-0 flex-col items-center bg-[#f0f0f0]">
      <div className="flex h-[21px] items-center"><Chev up /></div>
      <div className={`w-full bg-[#cdcdcd] ${thumb}`} />
      <div className="mt-auto flex h-[22px] items-center"><Chev /></div>
    </div>
  );
}

function Center() {
  return (
    <div className="flex h-full w-[1690px] shrink-0 flex-col pt-[4px]">
      <div className="mr-[2px] flex h-[667px] w-[1688px] flex-col border-b border-r border-[#696969] pl-[4px]">
        <div className="flex h-[660px] w-[1681px] flex-col border-r border-[#e3e3e3] border-t-2 border-t-[#696969]">
          <div className="flex h-[658px]">
            <Schematic />
            <VScroll thumb="h-[359px]" />
          </div>
        </div>
      </div>
      <div className="flex h-[32px] items-start justify-between pl-[4px] pr-[3px]">
        <div className="-mt-px flex h-[28px] w-[96px] items-center rounded-b-[3px] border-b-2 border-l border-r-2 border-black bg-[#f0f0f0] pl-[2px] pt-[2px]">
          <Ic n="sheet" big />
          <Fit w={64} className="ml-[4px] text-[15px] leading-[20px]">Design1 *</Fit>
        </div>
        <div className="mt-[6px] flex h-[18px] w-[18px] items-center justify-center border border-white border-b-[#696969] border-r-[#696969]"><svg viewBox="0 0 16 16" className="h-[15px] w-[15px]">{ICONS.cascade}</svg></div>
      </div>
    </div>
  );
}

type Ins = { top: string; wave?: string; wave2?: string; bg?: string; letters?: string; bot?: string };
const INS: Ins[] = [
  { top: "#000", bg: "#000", wave: "#0f0", wave2: "#088" },
  { top: "meter" },
  { top: "#d8d8d8", bg: "#e8e8e8", wave: "#44f", wave2: "#e22", bot: "short" },
  { top: "#fff", bg: "#e8e8e8", wave: "#0c0", wave2: "#e22" },
  { top: "#088", bg: "#088", wave: "#0e0", wave2: "#055" },
  { top: "num" },
  { top: "bits" },
  { top: "logic" },
  { top: "la" },
  { top: "iv" },
  { top: "dist" },
  { top: "spec" },
  { top: "net" },
  { top: "#000", bg: "#000", wave: "#0e0", wave2: "#088", letters: "AG" },
  { top: "mm", letters: "AG" },
  { top: "#d8d8d8", bg: "#e8e8e8", wave: "#44f", wave2: "#e22", letters: "AG" },
  { top: "#d8d8d8", bg: "#e8e8e8", wave: "#44f", wave2: "#e22", letters: "TK" },
];

function Instrument({ i }: { i: Ins }) {
  const L: Record<string, React.ReactNode> = {
    meter: <><path d="M0 0h8v8H0zM12 0h7v8h-7z" fill="#000" /><path d="M1.500 2h5v5h-5zM13 2h5v5h-5z" fill="#fff" /><path d="M2 7l4-4" stroke="#e00" strokeWidth="1.300" /><path d="M14 3l4 4" stroke="#00e" strokeWidth="1.300" /></>,
    num: <><path d="M0 0h19v10H0z" fill="#000" /><path d="M5 2v6M7 2h3v3H7v3h3M12 2h3v6h-3M12 5h3" fill="none" stroke="#0f0" strokeWidth="1.300" /></>,
    bits: <><path d="M0 0h19v9H0z" fill="#000" /><path d="M2 2v6M5 2v6M7 2v6M10 2v6M13 2v6M15 2v6M17.500 2v6" stroke="#0e0" strokeWidth="1.100" /></>,
    logic: <><path d="M0 0h19v12H0z" fill="#000" /><path d="M0 4h9M3 2h4v4H3zM9 5v5" fill="none" stroke="#1ee" strokeWidth="1.300" /><path d="M11 5h3v5h-3zM17 5v6" fill="none" stroke="#0f0" strokeWidth="1.300" /></>,
    la: <><path d="M4 0h15v18H4z" fill="#111" /><path d="M6 2h11v5H6z" fill="#a0104a" /><path d="M6 5h11" stroke="#f22" strokeWidth="2" /><path d="M5 10h12" stroke="#2bd" strokeWidth="1.300" /><path d="M5 14h12" stroke="#0c0" strokeWidth="1.300" /><path d="M1 1v17" stroke="#000" strokeDasharray="1 2" /></>,
    iv: <><path d="M0 0h15v11H0z" fill="#333" /><path d="M1 5l5-2 8 2" stroke="#088" strokeWidth="2" fill="none" /><path d="M1 8q5-4 13-1" stroke="#e22" strokeWidth="1.400" fill="none" /><path d="M2 10h12" stroke="#22e" /></>,
    dist: <><path d="M0 0h19v8H0z" fill="#111" /><path d="M9 6h1M11 7V4h3v3M15 3v4h3V2" fill="none" stroke="#0e0" strokeWidth="1.200" /></>,
    spec: <><path d="M0 0h19v10H0z" fill="#000" /><path d="M2 9V6M5 9V4M8 9V2M11 9V3M14 9V4M17 9V6" stroke="#0d0" strokeWidth="1.600" /></>,
    net: <><path d="M0 0h13v11H0z" fill="#0c2a0c" /><path d="M1 5.500q3-6 6 0t6 0M1 5.500q3 6 6 0t6 0" fill="none" stroke="#1d1" strokeWidth="1.300" /><path d="M15 2h3M15 5h3M15 8h3" stroke="#222" /></>,
    mm: <><path d="M0 0h8v4H0zM0 8V1" fill="#000" stroke="#000" /><path d="M1 4h12v5H1z" fill="#fff" /><path d="M5 9q4 0 5-3t5-4" fill="none" stroke="#22e" strokeWidth="1.300" /><path d="M16 1v6M14 4h4" stroke="#500" strokeWidth="1.300" /></>,
  };
  return (
    <svg viewBox="0 0 20 18" className="h-[18px] w-5 shrink-0">
      <path d="M0 0h19.500v17.500H0z" fill="#f8f8f8" /><path d="M0 17.500h19.500V0" fill="none" stroke="#9a9a9a" />
      {i.bg ? (
        <>
          <path d="M0 0h19v9H0z" fill={i.bg} /><path d="M0 1h19M0 9h19" stroke="#999" strokeWidth="1.500" />
          <path d="M1 7q2-6 4 0t4 0 4 0" fill="none" stroke={i.wave} strokeWidth="1.300" /><path d="M1 4q2 6 4 0t4 0 4 0" fill="none" stroke={i.wave2} strokeWidth="1.200" />
          {i.bg === "#000" ? <path d="M13 6q2-4 5 0" fill="none" stroke={i.wave} strokeWidth="1.300" /> : null}
          {i.bg === "#e8e8e8" ? <path d="M16.500 0v5M14.500 2.500h4.500" stroke="#e00" strokeWidth="1.100" /> : null}
          {i.bg === "#e8e8e8" ? <path d="M16.500 6v4M15 8h3.500" stroke="#000" strokeWidth="1.100" /> : null}
        </>
      ) : L[i.top]}
      {i.top === "la" ? null : i.letters ? (
        <path d={i.letters === "AG" ? "M9 16v-3l1-1h1l1 1v3M9 14.500h3M18 12h-3v4h3v-2" : "M8 12h4M10 12v4M15 12v4.500M18 12l-2.500 2L18 16.500"} fill="none" stroke="#11d" strokeWidth="1.300" />
      ) : (
        <path d="M5 14.500h2.500" stroke="#000" strokeWidth="2" />
      )}
      {i.top === "la" ? null : <path d="M1 14.500h4M2.500 13v3.500" stroke="#900" strokeWidth="1.200" />}
      {i.top === "la" || i.letters || i.bot ? null : <path d="M9 14.500h9M11 13v3.500M15 13v3.500" stroke="#111" strokeWidth="1.100" strokeDasharray="2 .8" />}
    </svg>
  );
}

function Instruments() {
  const hr = "h-[2px] w-[27px] border-b border-white bg-[#a0a0a0]";
  return (
    <div className="flex h-full w-[32px] flex-col">
      <div className="flex h-[613px] flex-col items-center border-b border-r border-[#a0a0a0] pt-[17px]">
        <svg viewBox="0 0 20 18" className="h-[18px] w-5 shrink-0">
          <path d="M5 1h9v16H5z" fill="#ccc" stroke="#888" strokeWidth=".6" /><path d="M6 2h7v3H6z" fill="#054" /><path d="M7 3.500h2M10 3.500h2" stroke="#2ff" strokeWidth="1.500" />
          <circle cx="9.500" cy="11" r="2.500" fill="#fff" stroke="#000" /><path d="M1.500 0v6" stroke="#fe0" strokeWidth="2" /><path d="M1.500 6v9l3 2" fill="none" stroke="#000" strokeWidth="2.500" /><path d="M18 0v6" stroke="#fe0" strokeWidth="1.500" /><path d="M17.500 5v9l-3 3" fill="none" stroke="#f00" strokeWidth="2.500" />
        </svg>
        <div className="mt-[8px] flex flex-col gap-[8px]">
          {INS.map((i, k) => <Instrument key={k} i={i} />)}
        </div>
        <div className={`mt-[7px] shrink-0 ${hr}`} />
        <svg viewBox="0 0 20 18" className="mt-[9px] h-[18px] w-5 shrink-0"><path d="M2 2h17v14H2z" fill="#111" /><path d="M2 1h17M2 17h17" stroke="#888" strokeWidth="2" strokeDasharray="1.500 1" /><path d="M6 4v10l9-5z" fill="#fe3" /><path d="M7.500 9h4M9.500 7v4" stroke="#000" /><path d="M0 6h5M15 9h5" stroke="#f11" strokeWidth="1.500" /><path d="M0 12h5" stroke="#11f" strokeWidth="1.500" /><path d="M17 3v12" stroke="#0aa" /></svg>
        <svg viewBox="0 0 4 6" className="mt-[7px] h-[6px] w-[4px] shrink-0"><path d="M0 0l4 3-4 3z" fill="#000" /></svg>
        <div className={`mt-[7px] shrink-0 ${hr}`} />
        <svg viewBox="0 0 20 18" className="mt-[10px] h-[18px] w-5 shrink-0" fill="none" stroke="#a8a8a8"><path d="M0 6q5 1 8 3M2 10l6-1 6-5M3 14l5 2 6-6 5-3M10 3l6 1-2 4zM6 12l4-3" strokeWidth="1.100" /></svg>
        <svg viewBox="0 0 4 6" className="mt-[5px] h-[6px] w-[4px] shrink-0"><path d="M0 0l4 3-4 3z" fill="#aaa" /></svg>
        <div className={`mt-[8px] shrink-0 ${hr}`} />
        <svg viewBox="0 0 20 20" className="mt-[5px] h-5 w-5 shrink-0" fill="none"><path d="M7 11L12 5" stroke="#000" strokeWidth="2.600" /><path d="M12 5l2-4 2 3 1-3 3-1" stroke="#000" /><path d="M9 15h11" stroke="#f11" strokeWidth="1.200" /><circle cx="5" cy="15" r="4.500" fill="#a00808" stroke="#400" /><path d="M2.500 15h5M5 12.500v5" stroke="#fff" strokeWidth="1.500" /></svg>
      </div>
      <div className="mt-auto h-px bg-[#a0a0a0]" />
    </div>
  );
}

const TXT: [string, number][] = [
  ["------ Checking SPICE netlist for Design1 - Tuesday, November 16, 2021, 10:30:00 AM ------", 598],
  ["Warning: Inductor-voltage source loop found: V1, L1. Since inductors are short-circuited during the DC bias point calculation, the loop will cause a problem for most analyses. Consider breaking the loop by inserting a small series resistor.", 1556],
  ["======= SPICE Netlist check completed, 0 error(s), 1 warning(s) =======", 503],
  ["Warning: Singular matrix. L1 might not be properly connected", 407],
  ["Simulation canceled", 134],
  ["Analysis calculation was unsuccessful because the matrix is singular", 442],
];

function Spreadsheet() {
  const tab = "flex items-center justify-center rounded-b-[3px] border-b-2 border-r-2 border-[#696969] border-l border-l-white";
  return (
    <div className="flex h-[180px] shrink-0 border-b border-t border-[#a0a0a0] border-t-[#696969]">
      <div className="flex w-[31px] shrink-0 flex-col pl-[2px] pt-[2px]">
        <div className="pl-[4px]"><MiniX /></div>
        <div className="mt-[2px] pl-[4px]"><div className={miniBtn}><svg viewBox="0 0 4 6" className="h-[6px] w-[4px]"><path d="M0 0l4 3-4 3z" fill="#999" /></svg></div></div>
        <div className="mt-[3px] flex h-[134px] w-[25px] items-end justify-center bg-gradient-to-b from-[#d7e4f2] to-[#bfcddb] pb-[3px]">
          <svg viewBox="0 0 22 126" className="h-[126px] w-[22px]"><text transform="translate(14.500 125) rotate(-90)" textLength="119" lengthAdjust="spacingAndGlyphs" fontSize="14" fontFamily="Noto Sans, sans-serif" fill="#111">Spreadsheet View</text></svg>
        </div>
      </div>
      <div className="flex flex-1 flex-col pt-[8px]">
        <div className="flex h-[140px] w-[1881px] border border-[#828790] bg-white p-px">
          <div className="flex min-w-0 flex-1 flex-col overflow-hidden pl-[7px]">
            {TXT.map(([t, w], k) => <div key={t} className="flex h-[24px] shrink-0 items-center"><Fit w={w} className={k === 0 ? "-mt-px text-[15px] leading-[24px]" : "-mt-px text-[15px] leading-[24px]"}>{t}</Fit></div>)}
          </div>
          <VScroll thumb="h-[66px]" />
        </div>
        <div className={`mt-[2px] flex h-[26px] items-start border-t border-[#696969] pl-[2px] text-[13.500px] leading-[18px] ${TAH}`}>
          <div className={`h-[21px] w-[52px] pb-px ${tab}`}><Fit w={42}>Results</Fit></div>
          <div className={`ml-px h-[21px] w-[46px] !justify-start pb-px pl-[3px] ${tab}`}><Fit w={26}>Nets</Fit></div>
          <div className={`ml-[2px] h-[21px] w-[82px] pb-px ${tab}`}><Fit w={71}>Components</Fit></div>
          <div className={`ml-px h-[21px] w-[88px] pb-px ${tab}`}><Fit w={80}>Copper layers</Fit></div>
          <div className={`-mt-px h-[24px] w-[75px] bg-[#f0f0f0] pt-px ${tab}`}><Fit w={60}>Simulation</Fit></div>
        </div>
      </div>
    </div>
  );
}

function StatusBar() {
  return (
    <div className="flex h-[23px] shrink-0 items-center border-t border-white pt-[2px] text-[14px] leading-[20px]">
      <div className="w-[1489px] pl-[1342px]">-</div>
      <div className="h-[19px] w-[183px] border-l border-[#d0d0d0]" />
      <div className="flex h-[19px] w-[183px] items-center border-l border-[#d0d0d0] pl-[4px]"><Fit w={91} className="text-[14.500px]">AC: 19.905 Hz</Fit></div>
      <div className="flex h-[19px] items-center border-l border-[#d0d0d0] pl-[4px]">
        {[0, 1, 2, 3, 4, 5, 6].map((k) => <div key={k} className="mr-[2px] h-[12px] w-[6px] border-b border-l border-r border-t border-[#909090] border-b-[#dcdcd0] border-r-[#dcdcd0]" />)}
      </div>
    </div>
  );
}

const TASK: { k: string; under?: string; bg?: string; w: string; art: React.ReactNode }[] = [
  { k: "win", w: "w-[60px]", art: <path d="M6 8l9-1.300v8.600H6zM16 6.500L26 5v10.300H16zM6 16.500h9v8.700L6 24zM16 16.500h10V27l-10-1.500z" fill="#fff" /> },
  { k: "search", w: "w-[61px]", art: <><circle cx="18" cy="12" r="6.500" fill="none" stroke="#fff" strokeWidth="1.500" /><path d="M13.500 17L6 26" stroke="#fff" strokeWidth="1.500" /></> },
  { k: "cortana", w: "w-[59px]", art: <circle cx="16" cy="16" r="8.500" fill="none" stroke="#f4f4f4" strokeWidth="2.600" /> },
  { k: "task", w: "w-[60px]", art: <path d="M6.500 6v3h12V6M6.500 26v-3h12v3M6.500 12h12v8h-12zM24 6v5M24 13v3M24 18v8" fill="none" stroke="#fff" strokeWidth="1.400" /> },
  { k: "edge", w: "w-[65px]", art: <><path d="M2 17C2 5 12 1 17 1c9 0 14 6 14 12 0 5-4 7-8 7-3 0-5-1-4-3 2-5-2-8-6-8-6 0-11 4-11 8z" fill="#35b9d8" /><path d="M19 1.500c8 .5 12 6 12 11.500 0 5-4 7-8 7-3 0-5-1-4-3 1-3 0-5-2-7 5-1 6-5 2-8.500z" fill="#5bdc6c" /><path d="M2 17c0-5 5-8 9-8-4 4-4 18 8 21C8 33 2 25 2 17z" fill="#1a6fd0" /><path d="M13 18c0 8 8 10 15 6-4 7-12 8-17 5s-3-10 2-11z" fill="#1352a4" /><circle cx="9.500" cy="24" r="7.500" fill="#8c8c8c" /><circle cx="9.500" cy="21.500" r="2.700" fill="#eee" /><path d="M5 29q0-5 4.500-5t4.500 5q-4 3-9 0z" fill="#eee" /></> },
  { k: "mail", w: "w-[62px]", art: <><path d="M1 12L16 2l15 10v3H1z" fill="#0a5cb0" /><path d="M1 12h30v18H1z" fill="#2aa8ee" /><path d="M31 12v18L14 20z" fill="#45c2f6" /><path d="M3 11h26L16 21z" fill="#f2f2f2" /></> },
  { k: "player", w: "w-[62px]", art: <><circle cx="16" cy="16" r="14.500" fill="#f2f2f2" stroke="#a8a8a8" strokeWidth="2" /><path d="M9 8v15l8-7.500z" fill="#2a78b8" /><path d="M14 8.500l9.500 7-4 3.500L14 13z" fill="#4a98d0" /><path d="M14 18l5.500 2.500L14 24z" fill="#4a98d0" /></> },
  { k: "opera", w: "w-[62px]", art: <><circle cx="16" cy="16" r="14.500" fill="#f0202c" /><path d="M16 1.500c-8 0-14.500 6-14.500 14.500S8 30.500 16 30.500z" fill="#d4101c" /><ellipse cx="16" cy="16" rx="6.800" ry="11" fill="#201e1d" /></> },
  { k: "exp", w: "w-[62px]", under: "w-[51px]", art: <><path d="M2 5h11l2 3h15v19H2z" fill="#f8d468" /><path d="M2 5h11l2 3H2z" fill="#e2a210" /><path d="M7 28V18h18v10h-5v-5h-8v5z" fill="#3d98e2" /></> },
  { k: "ppt", w: "w-[62px]", under: "w-[51px]", art: <><circle cx="18" cy="16" r="14" fill="#d35230" /><path d="M18 2a14 14 0 0 1 14 14H18z" fill="#ff8f6b" /><path d="M18 16h14a14 14 0 0 1-14 14z" fill="#ed6c47" /><rect x="1" y="8" width="15" height="15" rx="1.500" fill="#b7371c" /><text x="4.500" y="20" fontSize="12" fontWeight="bold" fontFamily="Open Sans, sans-serif" fill="#fff">P</text></> },
  { k: "word", w: "w-[61px]", under: "w-[61px]", bg: "bg-[#4b4a49]", art: <><path d="M8 2h23v7H8z" fill="#41a5ee" /><path d="M8 9h23v7H8z" fill="#2b7cd3" /><path d="M8 16h23v7H8z" fill="#185abd" /><path d="M8 23h23v6H8z" fill="#103f91" /><rect x="1" y="8" width="15" height="15" rx="1.500" fill="#2060c4" /><text x="2" y="20" fontSize="12" fontWeight="bold" fontFamily="Open Sans, sans-serif" fill="#fff">W</text></> },
  { k: "xl", w: "w-[61px]", art: <><path d="M8 2h11v14H8z" fill="#21a366" /><path d="M19 2h12v7H19z" fill="#33c481" /><path d="M19 9h12v7H19z" fill="#21a366" /><path d="M8 16h23v13H8z" fill="#185c37" /><path d="M8 16h11v7H8zM19 16h12v7H19z" fill="#107c41" /><rect x="1" y="8" width="15" height="15" rx="1.500" fill="#107c41" /><text x="4.500" y="20" fontSize="12" fontWeight="bold" fontFamily="Open Sans, sans-serif" fill="#fff">X</text></> },
  { k: "chrome", w: "w-[65px]", under: "w-[51px]", art: <><circle cx="16" cy="16" r="14" fill="#f9bc15" /><path d="M16 16L3.900 9A14 14 0 0 1 28.100 9z" fill="#e14434" /><path d="M3.900 9A14 14 0 0 0 16 30l6-10.500-6-3.500z" fill="#2da94f" /><circle cx="16" cy="16" r="7" fill="#fff" /><circle cx="16" cy="16" r="5.400" fill="#3f7de8" /></> },
];

function Taskbar() {
  return (
    <div className="flex h-[50px] shrink-0 bg-[#211f1e] text-white">
      <div className="flex">
        {TASK.map((t) => (
          <div key={t.k} className={`flex flex-col items-center ${t.w} ${t.bg ?? ""}`}>
            <div className="flex h-[47px] items-center pt-[3px]"><svg viewBox="0 0 32 32" className={["win", "search", "cortana", "task"].includes(t.k) ? "h-[32px] w-[32px]" : "h-[30px] w-[30px]"}>{t.art}</svg></div>
            {t.under ? <div className={`h-[3px] bg-[#76b9ed] ${t.under}`} /> : null}
          </div>
        ))}
        <div className="flex w-[61px] flex-col items-center bg-[#2f2d2d]">
          <div className="flex h-[47px] items-center pr-[3px] pt-[3px]"><NiLogo cls="h-[28px] w-[27px]" /></div>
          <div className="h-[3px] w-[55px] bg-[#76b9ed]" />
        </div>
      </div>
      <div className="ml-auto flex items-center">
        <div className="h-[24px] w-[24px] rounded-full bg-gradient-to-br from-[#ffe480] via-[#ffc03a] to-[#ff9410]" />
        <Fit w={94} className="ml-[13px] mt-[2px] text-[17px] leading-[24px]">79°F  Sunny</Fit>
        <svg viewBox="0 0 16 10" className="ml-[21px] h-[10px] w-[16px]"><path d="M1 9l7-7.500L15 9" fill="none" stroke="#fff" strokeWidth="1.400" /></svg>
        <svg viewBox="0 0 21 14" className="ml-[12px] h-[14px] w-[21px]"><path d="M5 3.500h13.500v9.500H4V9" fill="none" stroke="#fff" strokeWidth="1.300" /><path d="M7 5.500h10v5.500H6V9z" fill="#fff" /><path d="M19 6h1.800v4H19zM0 2h5v3q0 2-2.500 2T0 5zM1 0v2M4 0v2" fill="#fff" stroke="#fff" strokeWidth=".7" /></svg>
        <div className="ml-[11px] flex w-[31px] flex-col items-center text-[14px] leading-[23px]"><Fit w={29}>ENG</Fit><Fit w={29}>INTL</Fit></div>
        <div className="ml-[13px] flex w-[72px] flex-col items-center text-[14px] leading-[23px]"><Fit w={61}>10:33 AM</Fit><Fit w={70}>16-Nov-21</Fit></div>
        <svg viewBox="0 0 20 20" className="ml-[22px] h-5 w-5"><path d="M.7.700h18.600v16.300h-7L10 19.300 7.700 17H.7z" fill="none" stroke="#fff" strokeWidth="1.300" /></svg>
        <div className="ml-[25px] mr-[5px] h-[50px] w-px bg-[#777]" />
      </div>
    </div>
  );
}

const GM: [string, number, string][] = [["File", 23, ""], ["Edit", 26, "ml-[13px]"], ["View", 32, "ml-[13px]"], ["Graph", 40, "ml-[13px]"], ["Trace", 35, "ml-[13px]"], ["Cursor", 42, "ml-[14px]"], ["Legend", 49, "ml-[13px]"], ["Tools", 35, "ml-[13px]"], ["Help", 32, "ml-[14px]"]];

const decade = (x0: number, w: number, y: number) => {
  let d = "";
  for (let dec = 0; dec < 2; dec++)
    for (let k = 2; k <= 10; k++) d += `M${(x0 + w * (dec + Math.log10(k))).toFixed(1)} ${y}v${k === 10 ? 4 : 2}`;
  return d;
};
const tri = ([x, y]: number[]) => `M${x - 3} ${y + 3}h6.500l-3.200-6.500z`;
const P1 = [[1356, 348.500], [1416, 351.500], [1476, 359.500], [1536, 376]];
const P2 = [[1341, 526.700], [1401, 536.700], [1461, 551.300], [1521, 572.700]];

function Legend({ y }: { y: number }) {
  return (
    <g>
      <path d={`M1036 ${y}v17l5-8.500z`} fill="#f00" />
      <rect x="1041.500" y={y + 2} width="12.500" height="12.500" fill="#fff" /><path d={`M1044 ${y + 8}l2.500 4 5.500-8`} fill="none" stroke="#000" strokeWidth="1.700" />
      <text x="1058" y={y + 3} fontSize="13" textLength="24">V(3)</text>
      <path d={`M1058 ${y + 9.500}h51`} stroke="#f00" strokeWidth="1.200" />
    </g>
  );
}

function Plot() {
  return (
    <svg viewBox="1030 279 795 424" className="h-[424px] w-[795px] shrink-0 bg-black" fill="#fff" fontFamily="Liberation Sans, Arial, sans-serif">
      <g fontSize="26"><text x="1378" y="305" textLength="99">Design1</text><text x="1364" y="336" textLength="128">AC Sweep</text></g>
      <g fontSize="20">
        <text transform="translate(1051 399.500) rotate(-90)" textLength="94">Magnitude</text>
        <text transform="translate(1051 601.500) rotate(-90)" textLength="107">Phase (deg)</text>
        <text x="1396" y="452" textLength="136">Frequency (Hz)</text><text x="1383" y="654" textLength="136">Frequency (Hz)</text>
      </g>
      <g fontSize="16">
        <text x="1062" y="361" textLength="40">1.000</text><text x="1062" y="396" textLength="40">0.991</text>
        <text x="1106" y="424">1</text><text x="1455.500" y="424">10</text><text x="1794.500" y="424">100</text>
        <text x="1060" y="533">-1</text><text x="1060" y="570.500">-5</text><text x="1060" y="597.500">-8</text>
        <text x="1081" y="626">1</text><text x="1442.500" y="626">10</text><text x="1794.500" y="626">100</text>
      </g>
      <g stroke="#fff" strokeWidth="1.200" fill="none">
        <path d="M1106.500 345v59M1103 400.500H1821.500" />
        <path d={[345.500, 351.500, 357.500, 363.500, 369.500, 375.500, 381.500, 387.500, 394.500].map((y) => `M1103 ${y}h3`).join("")} />
        <path d={decade(1106.500, 357.500, 400)} />
        <path d="M1083.500 517v86M1080 602.500H1821.500M1081.500 602v4" />
        <path d={[517.500, 529.500, 541.500, 553.500, 565.500, 578.500, 590.500].map((y) => `M1080 ${y}h3`).join("")} />
        <path d={decade(1081.500, 370, 602)} />
      </g>
      <path d="M1356 348.500L1390 350.300 1416 351.500Q1450 355 1476 359.500 1510 366 1536 376 1555 384 1570 393" fill="none" stroke="#f00" strokeWidth="1.200" />
      <path d="M1341 526.700L1371 531 1401 536.700 1431 543.500 1461 551.300 1491 560.300 1521 572.700 1562 591.700" fill="none" stroke="#f00" strokeWidth="1.200" />
      <path d={[...P1, ...P2].map(tri).join("")} fill="none" stroke="#fff" strokeWidth="1.100" />
      <Legend y={469} /><Legend y={671} />
    </svg>
  );
}

function Grapher() {
  const blue = "border border-[#90c4ee] bg-[#c2dcf2]";
  return (
    <div className="absolute left-[1024px] top-[155px] flex h-[579px] w-[807px] flex-col border border-[#707070] bg-[#f0f0f0] shadow-[2px_4px_16px_4px_rgba(0,0,0,0.38)]">
      <div className="flex h-[38px] shrink-0 items-center border-b border-[#a0a0a0] bg-white pb-[2px] pl-[9px]"><Fit w={89} className="text-[15px] leading-[20px]">Grapher View</Fit></div>
      <div className="flex h-[30px] shrink-0 items-center border-b border-[#a0a0a0] pb-[2px] pl-[10px] text-[15px] leading-[20px]">
        {GM.map(([t, w, m]) => <Fit key={t} w={w} className={m}>{t}</Fit>)}
      </div>
      <div className="flex h-[30px] shrink-0 items-center border-b border-[#a0a0a0]">
        <div className="-ml-px flex items-center">
          <Slots w="w-[30px]" names={["open", "save"]} />
          <Sep m="ml-0 mr-[3px]" />
          <Slots w="w-[29px]" names={["undog", "x", "copy", "pasteg"]} />
          <Sep m="ml-[3px] mr-[2px]" />
          <Slots w="w-[29px]" on={["legend", "contrast"]} onCls={blue} names={["grid", "legend", "cursors", "contrast"]} />
          <Sep m="ml-[2px] mr-[4px]" />
          <Slots w="w-[29px]" on={["peak"]} onCls={blue} names={["peak", "dots", "dotsl"]} />
          <Sep m="ml-[1px] mr-[3px]" />
          <Slots w="w-[29px]" on={["zr1"]} onCls={blue} names={["zin", "zout", "zfitg", "zr1", "zr2", "zr3", "hand"]} />
          <Sep m="ml-[2px] mr-[3px]" />
          <Slots w="w-[29px]" names={["letA", "xy"]} />
          <Sep m="ml-[2px] mr-[3px]" />
          <Slots w="w-[29px]" names={["waves", "merge"]} />
          <Sep m="ml-[2px] mr-[3px]" />
          <Slots w="w-[29px]" names={["xls", "lv"]} />
          <Sep m="ml-[2px] mr-0" />
        </div>
      </div>
      <div className={`flex h-[25px] shrink-0 items-end pl-[3px] text-[13.500px] leading-[18px] ${TAH}`}>
        {[0, 1, 2, 3, 4, 5, 6, 7, 8, 9].map((k) => (
          <div key={k} className={`flex h-[21px] w-[71px] items-center border-r-2 pb-[3px] pl-[6px] ${k === 9 ? "border-[#f0f0f0]" : "border-[#808080]"}`}><Fit w={59}>AC Sweep</Fit></div>
        ))}
        <div className="flex h-[24px] w-[52px] items-start overflow-hidden border-l border-t border-white pl-[5px]"><Fit w={59}>AC Sweep</Fit></div>
        <div className="mb-[5px]"><TriPair h="h-[18px]" /></div>
      </div>
      <div className="ml-px mr-[2px] h-[428px] w-[802px] shrink-0 border-b-2 border-l border-r-2 border-[#696969] border-l-white bg-white">
        <div className="ml-[3px] w-[797px] border-r-2 border-[#f0f0f0]"><Plot /></div>
      </div>
      <div className="mt-px flex flex-1 items-end justify-end border-t border-[#c8c8c8] pb-[2px] pr-[2px]">
        <div className="mr-[5px] h-full w-px bg-[#d0d0d0]" />
        <svg viewBox="0 0 12 12" className="h-[12px] w-[12px]"><path d="M8 0h3v3H8zM4 4h3v3H4zM8 4h3v3H8zM0 8h3v3H0zM4 8h3v3H4zM8 8h3v3H8z" fill="#bfbfbf" /></svg>
      </div>
      <svg viewBox="0 0 5 18" className="absolute left-0 top-[443px] h-[19px] w-[5px]"><path d="M0 0v18l5-9z" fill="#f00" /></svg>
    </div>
  );
}

export default function App() {
  return (
    <div className={`relative flex h-[1080px] w-[1920px] flex-col overflow-hidden bg-[#f0f0f0] text-[#111] ${UI}`}>
      <Top />
      <div className="flex h-[703px] shrink-0 border-t border-[#808080]">
        <Toolbox />
        <Center />
        <Instruments />
      </div>
      <Spreadsheet />
      <StatusBar />
      <Taskbar />
      <Grapher />
    </div>
  );
}
